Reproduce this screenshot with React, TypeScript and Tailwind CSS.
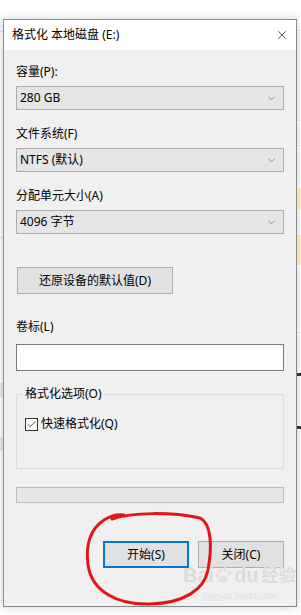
import { Check, ChevronDown, X } from "lucide-react";

// Fonts
const font = '"Noto Sans", "Noto Sans CJK SC", sans-serif';

// Types
type TSelect = { label: string; value: string; gap: string };

const selects: TSelect[] = [
  { label: "容量(P):", value: "280 GB", gap: "mt-[14px]" },
  { label: "文件系统(F)", value: "NTFS (默认)", gap: "mt-[16px]" },
  { label: "分配单元大小(A)", value: "4096 字节", gap: "mt-[16px]" },
];

function Select({ item }: { item: TSelect }) {
  return (
    <div className={item.gap}>
      <div className="h-[16px] leading-[16px]">{item.label}</div>
      <div className="mt-[6px] flex h-[24px] items-center justify-between border border-[#adadad] bg-[#e5e5e5] pl-[3px] pr-[6px]">
        <span>{item.value}</span>
        <ChevronDown className="h-[11px] w-[11px] text-[#555]" strokeWidth={1.3} />
      </div>
    </div>
  );
}

function Watermark() {
  return (
    <div className="pointer-events-none absolute left-[183px] top-[566px] flex flex-col items-center text-[#dcdcdc]">
      <div className="flex h-[18px] items-center text-[20px] font-bold leading-[18px]" style={{ fontFamily: '"Liberation Sans", sans-serif' }}>
        <span>Bai</span>
        <svg width="18" height="18" viewBox="0 0 18 18" className="mx-[1px]">
          <g fill="#e2e2e2">
            <ellipse cx="5" cy="5" rx="2" ry="2.6" />
            <ellipse cx="10" cy="3.5" rx="2" ry="2.6" />
            <ellipse cx="14.5" cy="7" rx="2" ry="2.4" />
            <ellipse cx="2.5" cy="9.5" rx="1.8" ry="2.2" />
            <path d="M4 15 C4 10, 9 8, 12 12 C14 15, 12 17, 9 16 C7 15.5, 5 17, 4 15 Z" />
          </g>
        </svg>
        <span>du</span>
        <span className="ml-[3px] text-[17px]" style={{ fontFamily: font }}>经验</span>
      </div>
      <div className="mt-[6px] text-[10px] leading-[12px] text-[#e0e0e0]" style={{ fontFamily: '"Liberation Serif", serif' }}>
        jingyan.baidu.com
      </div>
    </div>
  );
}

export default function App() {
  return (
    <div
      className="relative flex h-[615px] w-[301px] overflow-hidden bg-white text-[12px] text-black"
      style={{ fontFamily: font }}
    >
      {/* Left strip behind dialog */}
      <div className="flex w-[3px] flex-col pt-[31px]">
        <div className="h-px bg-[#e3e3e3]" />
        <div className="mt-[205px] h-px bg-[#e3e3e3]" />
        <div className="mt-[145px] h-[14px] bg-[#e8e8e8]" />
        <div className="mt-[40px] h-[14px] bg-[#e8e8e8]" />
      </div>

      {/* Dialog */}
      <div className="mt-[19px] flex h-[588px] w-[294px] flex-col border border-[#8a8a8a] bg-[#f0f0f0] shadow-[0_0_10px_rgba(0,0,0,0.18)]">
        {/* Title Bar */}
        <div className="flex h-[30px] items-center justify-between bg-white pl-[8px] pr-[7px]">
          <span className="text-[12px]">格式化 本地磁盘 (E:)</span>
          <X className="h-[14px] w-[14px] text-[#111]" strokeWidth={1.2} />
        </div>

        {/* Body */}
        <div className="flex flex-col px-[12px]">
          {selects.map((item, index) => (
            <Select key={index} item={item} />
          ))}

          {/* Restore Defaults */}
          <button className="ml-[1px] mt-[33px] h-[27px] w-[156px] border border-[#adadad] bg-[#e1e1e1] text-[12px]">
            还原设备的默认值(D)
          </button>

          {/* Volume Label */}
          <div className="mt-[25px] h-[16px] leading-[16px]">卷标(L)</div>
          <div className="mt-[9px] h-[27px] border border-[#7a7a7a] bg-white" />

          {/* Format Options */}
          <fieldset className="mt-[15px] h-[83px] border border-[#dcdcdc] pl-[6px]">
            <legend className="px-[2px] leading-[16px]">格式化选项(O)</legend>
            <label className="ml-[2px] mt-[15px] flex items-center gap-[3px]">
              <span className="flex h-[13px] w-[13px] items-center justify-center border border-[#333] bg-white">
                <Check className="h-[11px] w-[11px] text-[#222]" strokeWidth={1.6} />
              </span>
              <span className="leading-[14px]">快速格式化(Q)</span>
            </label>
          </fieldset>

          {/* Progress */}
          <div className="mt-[18px] h-[16px] border border-[#bcbcbc] bg-[#e6e6e6]" />

          {/* Actions */}
          <div className="mt-[38px] flex justify-end gap-[9px]">
            <button className="h-[27px] w-[86px] border-2 border-[#0078d7] bg-[#e1e1e1] text-[12px]">开始(S)</button>
            <button className="h-[27px] w-[86px] border border-[#adadad] bg-[#e1e1e1] text-[12px]">关闭(C)</button>
          </div>
        </div>
      </div>

      {/* Right strip behind dialog */}
      <div className="flex w-[4px] flex-col pt-[30px]">
        <div className="h-px bg-[#dedede]" />
        <div className="mt-[89px] h-px bg-[#e3e3e3]" />
        <div className="mt-[24px] h-px bg-[#e3e3e3]" />
        <div className="mt-[42px] h-[22px] bg-[#f3e3b5]" />
        <div className="mt-[25px] h-[30px] bg-[#f3e3b5]" />
        <div className="mt-[67px] h-px bg-[#e3e3e3]" />
        <div className="mt-[40px] h-[3px] bg-[#333]" />
        <div className="mt-[50px] h-[3px] bg-[#333]" />
      </div>

      {/* Watermark */}
      <Watermark />

      {/* Red annotation circle */}
      <svg className="pointer-events-none absolute left-0 top-0" width="301" height="615">
        <path
          d="M112 519 C132 512 172 512 200 518 C212 524 212 548 208 570 C204 590 184 603 150 604 C118 605 92 592 88 565 C85 542 92 528 104 520 C110 516 118 514 124 515"
          fill="none"
          stroke="#e3151b"
          strokeWidth="3"
          strokeLinecap="round"
        />
      </svg>
    </div>
  );
}
